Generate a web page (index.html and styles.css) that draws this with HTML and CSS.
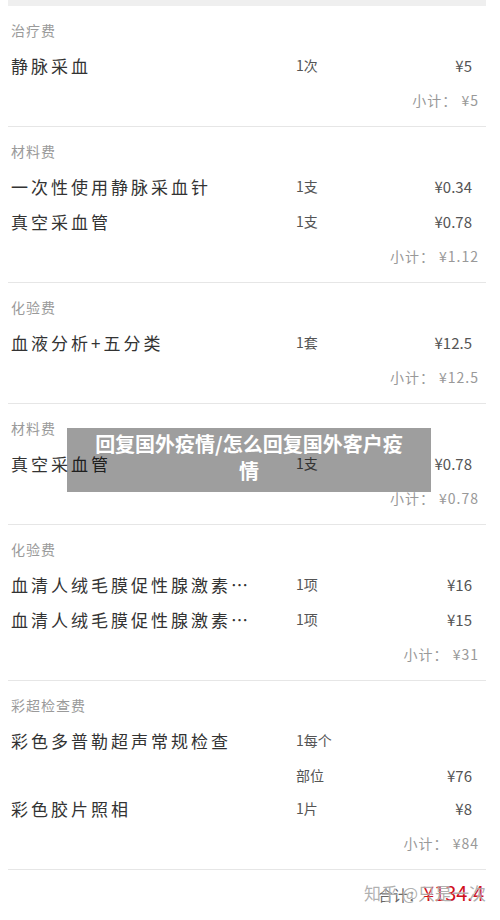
FILE: index.html
```html
<!DOCTYPE html>
<html lang="zh-CN">
  <head>
    <meta charset="UTF-8" />
    <meta name="viewport" content="width=device-width, initial-scale=1.0" />
    <title>费用清单</title>
    <link rel="stylesheet" href="styles.css">
  </head>
  <body>
    <div class="bill">
      <div class="section">
        <div class="cat">治疗费</div>
        <div class="item"><span class="name">静脉采血</span><span class="qty">1次</span><span class="price">¥5</span></div>
        <div class="sub">小计： ¥5</div>
      </div>

      <div class="section">
        <div class="cat">材料费</div>
        <div class="item"><span class="name">一次性使用静脉采血针</span><span class="qty">1支</span><span class="price">¥0.34</span></div>
        <div class="item"><span class="name">真空采血管</span><span class="qty">1支</span><span class="price">¥0.78</span></div>
        <div class="sub">小计： ¥1.12</div>
      </div>

      <div class="section">
        <div class="cat">化验费</div>
        <div class="item"><span class="name">血液分析+五分类</span><span class="qty">1套</span><span class="price">¥12.5</span></div>
        <div class="sub">小计： ¥12.5</div>
      </div>

      <div class="section">
        <div class="cat">材料费</div>
        <div class="item"><span class="name">真空采血管</span><span class="qty">1支</span><span class="price">¥0.78</span></div>
        <div class="sub">小计： ¥0.78</div>
      </div>

      <div class="section">
        <div class="cat">化验费</div>
        <div class="item"><span class="name">血清人绒毛膜促性腺激素…</span><span class="qty">1项</span><span class="price">¥16</span></div>
        <div class="item"><span class="name">血清人绒毛膜促性腺激素…</span><span class="qty">1项</span><span class="price">¥15</span></div>
        <div class="sub">小计： ¥31</div>
      </div>

      <div class="section">
        <div class="cat">彩超检查费</div>
        <div class="item tall"><span class="name">彩色多普勒超声常规检查</span><span class="qty">1每个<br>部位</span><span class="price">¥76</span></div>
        <div class="item"><span class="name">彩色胶片照相</span><span class="qty">1片</span><span class="price">¥8</span></div>
        <div class="sub">小计： ¥84</div>
      </div>

      <div class="total">
        <span class="total-label">合计：</span><span class="total-sum">¥134.4</span>
        <span class="watermark">知乎 @只是一次</span>
      </div>
    </div>

    <div class="banner">回复国外疫情/怎么回复国外客户疫情</div>
  </body>
</html>
```

FILE: styles.css
```css
body {
  margin: 0;
  background: #fff;
  font-family: "Noto Sans CJK SC", "Noto Sans", sans-serif;
  color: #3a3a3a;
}
.bill {
  margin: 0 14px 0 8px;
  border-top: 6px solid #efefef;
  position: relative;
}
.section {
  padding: 7px 0 8px;
  border-bottom: 1px solid #e6e6e6;
}
.cat {
  height: 35px;
  line-height: 35px;
  padding-left: 3px;
  font-size: 14px;
  letter-spacing: 1px;
  color: #9a9a9a;
}
.item {
  display: grid;
  grid-template-columns: 285px 1fr auto;
  height: 35px;
  line-height: 35px;
  padding: 0 14px 0 3px;
}
.item .name {
  font-size: 17px;
  letter-spacing: 3px;
  white-space: nowrap;
  color: #333;
}
.item .qty {
  font-size: 14px;
  color: #555;
}
.item .price {
  font-size: 15px;
  color: #555;
}
.item.tall {
  height: 68px;
}
.item.tall .price {
  align-self: end;
}
.sub {
  height: 35px;
  line-height: 35px;
  text-align: right;
  padding-right: 7px;
  font-size: 14px;
  letter-spacing: 1px;
  color: #999;
}
.total {
  position: relative;
  height: 46px;
  line-height: 46px;
  text-align: right;
  padding-right: 2px;
}
.total-label {
  font-size: 15px;
  color: #666;
}
.total-sum {
  font-size: 20px;
  color: #d0101b;
}
.watermark {
  position: absolute;
  right: 0;
  top: 0;
  font-size: 17px;
  color: rgba(110, 110, 110, 0.55);
  text-shadow: 0 0 1px #fff;
}
.banner {
  position: absolute;
  left: 67px;
  top: 428px;
  width: 320px;
  height: 62px;
  padding: 2px 22px 0;
  box-sizing: content-box;
  background: rgba(0, 0, 0, 0.38);
  color: #fff;
  font-size: 20px;
  font-weight: bold;
  line-height: 27px;
  text-align: center;
}
```
